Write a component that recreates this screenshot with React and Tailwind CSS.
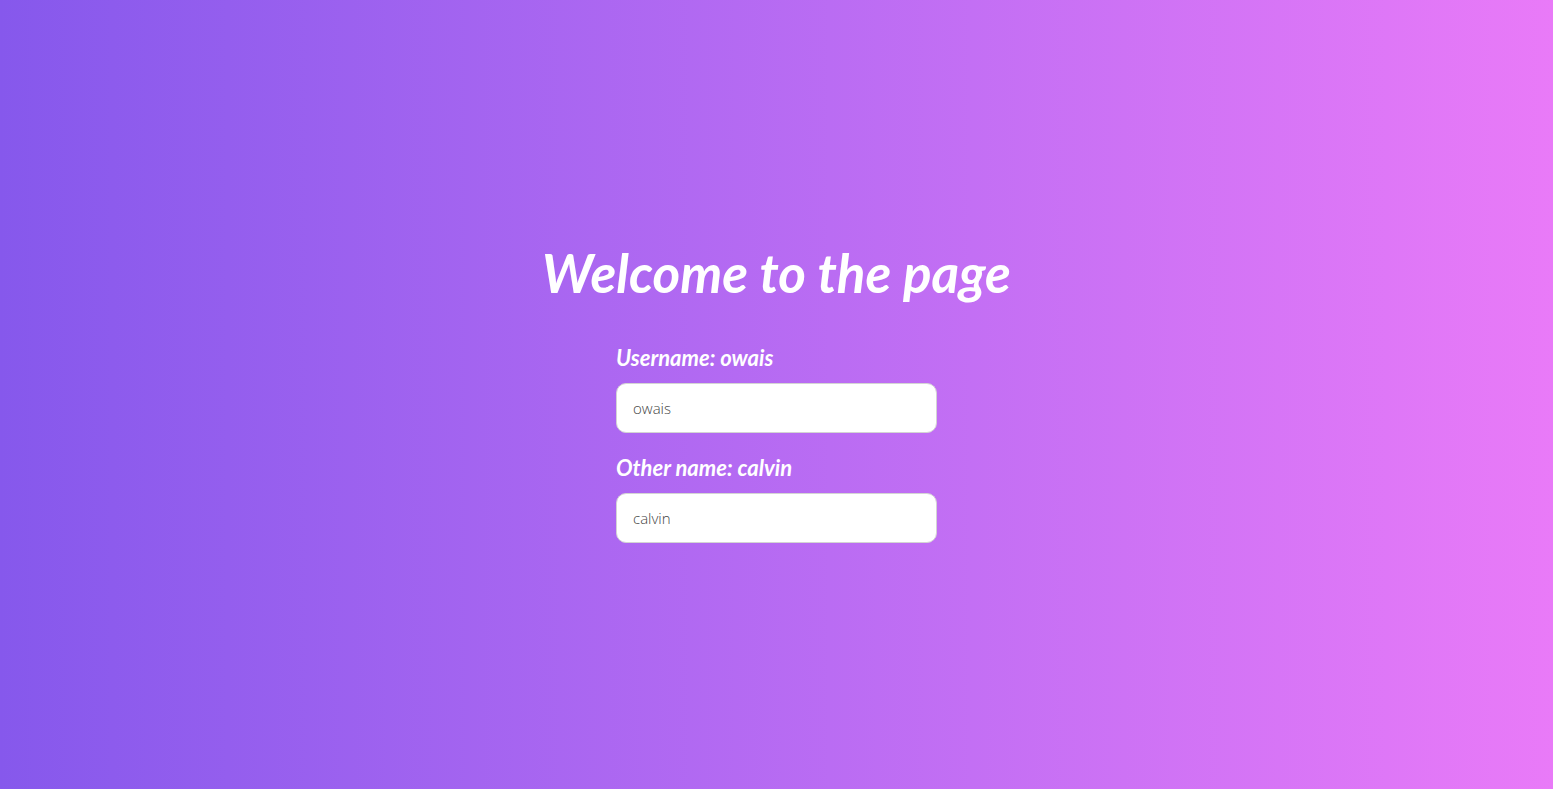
const App = () => {
  return (
    <div className="min-h-screen w-full bg-gradient-to-r from-[#8658ec] to-[#e97af8] flex flex-col items-center justify-center font-['Lato',sans-serif]">
      <h1 className="text-[53px] font-bold italic text-white leading-[58px] mb-[44px] -mt-[2px]">
        Welcome to the page
      </h1>
      <form className="w-[321px] flex flex-col">
        <label className="block text-white font-bold italic text-[22px] leading-[24px] mb-[13px]">
          Username: owais
        </label>
        <input
          type="text"
          name="username"
          defaultValue="owais"
          className="h-[50px] w-full bg-white rounded-[10px] border border-[#d4d4d4] px-[16px] text-[15px] text-[#444] font-light font-['Open_Sans',sans-serif] outline-none mb-[23px]"
        />
        <label className="block text-white font-bold italic text-[22px] leading-[24px] mb-[13px]">
          Other name: calvin
        </label>
        <input
          type="text"
          name="otherName"
          defaultValue="calvin"
          className="h-[50px] w-full bg-white rounded-[10px] border border-[#d4d4d4] px-[16px] text-[15px] text-[#444] font-light font-['Open_Sans',sans-serif] outline-none"
        />
      </form>
    </div>
  );
};

export default App;
